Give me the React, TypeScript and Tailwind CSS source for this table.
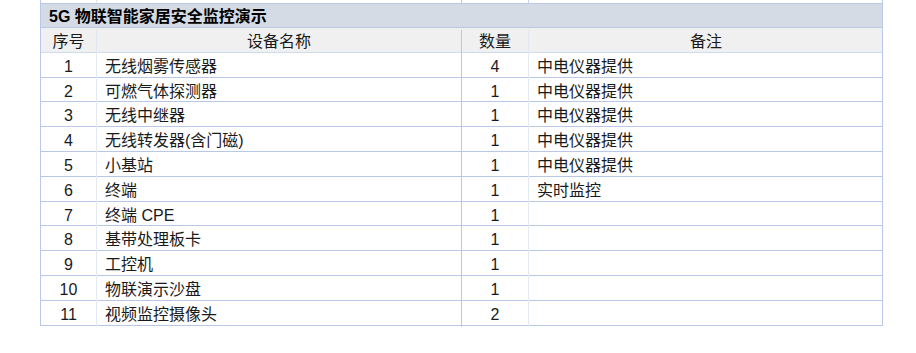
const rows: [string, string, string, string][] = [
  ["1", "无线烟雾传感器", "4", "中电仪器提供"],
  ["2", "可燃气体探测器", "1", "中电仪器提供"],
  ["3", "无线中继器", "1", "中电仪器提供"],
  ["4", "无线转发器(含门磁)", "1", "中电仪器提供"],
  ["5", "小基站", "1", "中电仪器提供"],
  ["6", "终端", "1", "实时监控"],
  ["7", "终端 CPE", "1", ""],
  ["8", "基带处理板卡", "1", ""],
  ["9", "工控机", "1", ""],
  ["10", "物联演示沙盘", "1", ""],
  ["11", "视频监控摄像头", "2", ""],
];

const cols = "grid grid-cols-[56px_365px_67px_354px]";

const App = () => {
  return (
    <div
      className="w-[916px] h-[353px] bg-white text-[16px] text-[#1a1a1a] pl-10"
      style={{ fontFamily: '"Liberation Sans", "Noto Sans CJK SC", sans-serif' }}
    >
      <div className="w-[843px] border-l border-r border-[#b8c8e6]">
        {/* cut-off row above */}
        <div className={`${cols} h-[3px]`}>
          <div className="border-r border-[#dfe6f2]" />
          <div className="border-r border-[#b8c8e6]" />
          <div className="border-r border-[#c9d5ec]" />
          <div />
        </div>

        {/* title */}
        <div className="h-[25px] flex items-center pt-[2px] bg-[#d4dbe4] border-t border-b border-[#b8c8e6] px-2 font-bold text-black">
          5G 物联智能家居安全监控演示
        </div>

        {/* header */}
        <div className={`${cols} h-[24.8px] pt-[2px] bg-[#f0f0f0] border-b border-[#d0dbee]`}>
          <div className="flex items-center justify-center border-r border-[#dfe6f2]">序号</div>
          <div className="flex items-center justify-center border-r border-[#b8c8e6]">设备名称</div>
          <div className="flex items-center justify-center border-r border-[#e2e8f2]">数量</div>
          <div className="flex items-center justify-center">备注</div>
        </div>

        {rows.map(([no, name, qty, note]) => (
          <div key={no} className={`${cols} h-[24.8px] border-b border-[#b8c8e6]`}>
            <div className="flex items-center justify-center pt-[2px] border-r border-[#e4eaf4]">{no}</div>
            <div className="flex items-center pl-2 pt-[2px] border-r border-[#b8c8e6]">{name}</div>
            <div className="flex items-center justify-center pt-[2px] border-r border-[#e4eaf4]">{qty}</div>
            <div className="flex items-center pl-2 pt-[2px]">{note}</div>
          </div>
        ))}
      </div>
    </div>
  );
};

export default App;
